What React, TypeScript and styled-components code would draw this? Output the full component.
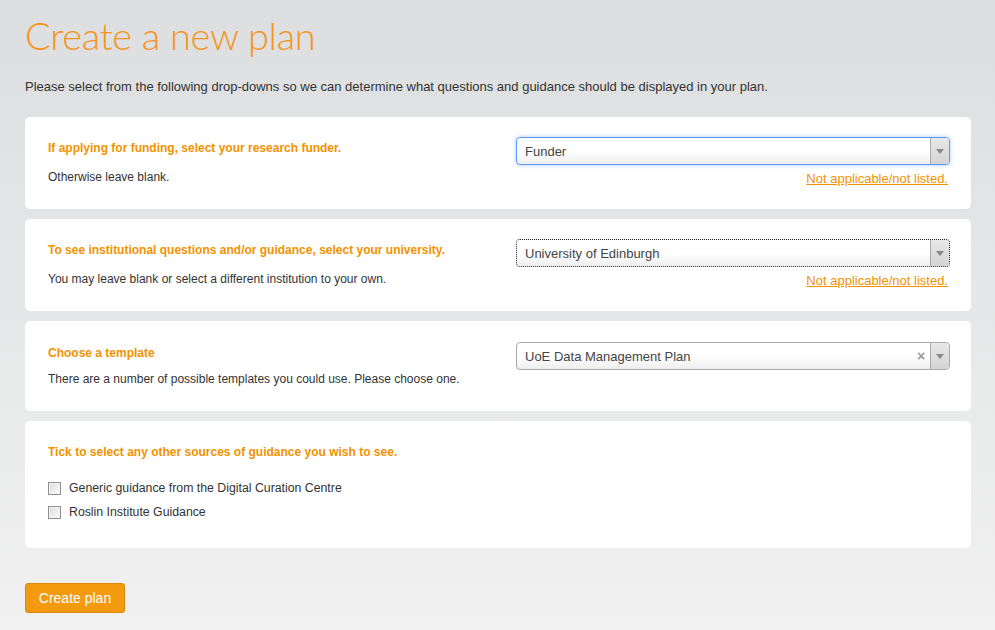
import React from 'react';
import styled, { createGlobalStyle } from 'styled-components';

const GlobalStyle = createGlobalStyle`
  html, body {
    margin: 0;
    padding: 0;
    min-height: 100%;
  }
  body {
    background: linear-gradient(to bottom, #dcdedf 0%, #f1f1f1 100%);
    font-family: 'Liberation Sans', Arial, sans-serif;
    font-size: 12px;
    color: #333;
    min-height: 630px;
  }
`;

const Page = styled.div`
  padding: 15px 24px 20px 25px;
`;

const Title = styled.h1`
  margin: 0;
  font-family: Lato, 'Liberation Sans', sans-serif;
  font-weight: 300;
  font-size: 38px;
  line-height: 40px;
  letter-spacing: -0.3px;
  color: #f7941d;
`;

const Intro = styled.p`
  margin: 24px 0 23px;
  font-size: 13px;
  line-height: 15px;
  color: #333;
`;

const Cards = styled.div`
  display: flex;
  flex-direction: column;
  gap: 10px;
`;

const Card = styled.section<{ $pad?: string }>`
  background: #fff;
  border-radius: 5px;
  padding: ${({ $pad }) => $pad || '20px 21px 24px 23px'};
  display: grid;
  grid-template-columns: 1fr 434px;
  column-gap: 20px;
`;

const Wide = styled.section`
  background: #fff;
  border-radius: 5px;
  padding: 24px 23px 28px;
`;

const Left = styled.div`
  padding-top: 4px;
`;

const Label = styled.div`
  font-weight: bold;
  color: #f39200;
  line-height: 15px;
`;

const Hint = styled.div<{ $gap: number }>`
  margin-top: ${({ $gap }) => $gap}px;
  line-height: 15px;
  color: #333;
`;

const Right = styled.div`
  display: flex;
  flex-direction: column;
  align-items: flex-end;
`;

const SelectBox = styled.div<{ $state?: 'focus' | 'dotted' }>`
  width: 100%;
  box-sizing: border-box;
  height: 28px;
  display: flex;
  align-items: stretch;
  border-radius: 4px;
  background: linear-gradient(to bottom, #ffffff 0%, #ffffff 50%, #eeeeee 100%);
  border: 1px solid #aaa;
  ${({ $state }) =>
    $state === 'focus'
      ? 'border-color: #5897fb; box-shadow: 0 0 4px rgba(88,151,251,0.5);'
      : ''}
  ${({ $state }) => ($state === 'dotted' ? 'border: 1px dotted #222;' : '')}
`;

const SelectText = styled.span`
  flex: 1;
  padding-left: 8px;
  display: flex;
  align-items: center;
  font-size: 13px;
  color: #444;
`;

const Clear = styled.span`
  width: 18px;
  display: flex;
  align-items: center;
  justify-content: center;
  color: #999;
  font-size: 14px;
  font-weight: bold;
`;

const Arrow = styled.span`
  width: 18px;
  border-left: 1px solid #aaa;
  border-radius: 0 3px 3px 0;
  background: linear-gradient(to bottom, #e8e8e8 0%, #d4d4d4 100%);
  display: flex;
  align-items: center;
  justify-content: center;

  &::after {
    content: '';
    border-left: 4px solid transparent;
    border-right: 4px solid transparent;
    border-top: 5px solid #888;
  }
`;

const NotListed = styled.a`
  margin-top: 6px;
  margin-right: 2px;
  font-size: 13px;
  line-height: 15px;
  color: #f39200;
  text-decoration: underline;
  cursor: pointer;
`;

const Checks = styled.div`
  margin-top: 21px;
  display: flex;
  flex-direction: column;
  gap: 9px;
`;

const CheckRow = styled.label`
  display: flex;
  align-items: center;
  gap: 8px;
  font-size: 12.3px;
  line-height: 15px;
  color: #333;
`;

const Box = styled.input.attrs({ type: 'checkbox' })`
  appearance: none;
  margin: 0;
  width: 13px;
  height: 13px;
  box-sizing: border-box;
  border: 1px solid #8f8f8f;
  background: linear-gradient(135deg, #dcdcdc 0%, #fbfbfb 100%);
  box-shadow: inset 0 0 0 1px #f4f4f4;
`;

const Submit = styled.button`
  margin-top: 35px;
  width: 100px;
  height: 30px;
  border: 1px solid #dd8a08;
  border-radius: 3px;
  background: #f49a0f;
  color: #fff;
  font-family: 'Liberation Sans', Arial, sans-serif;
  font-size: 14px;
  cursor: pointer;
`;

interface SelectProps {
  value: string;
  state?: 'focus' | 'dotted';
  clearable?: boolean;
}

const Select: React.FC<SelectProps> = ({ value, state, clearable }) => (
  <SelectBox $state={state}>
    <SelectText>{value}</SelectText>
    {clearable && <Clear>×</Clear>}
    <Arrow />
  </SelectBox>
);

const guidance = [
  'Generic guidance from the Digital Curation Centre',
  'Roslin Institute Guidance',
];

const App: React.FC = () => (
  <Page>
    <GlobalStyle />
    <Title>Create a new plan</Title>
    <Intro>
      Please select from the following drop-downs so we can determine what
      questions and guidance should be displayed in your plan.
    </Intro>
    <Cards>
      <Card $pad="20px 21px 23px 23px">
        <Left>
          <Label>If applying for funding, select your research funder.</Label>
          <Hint $gap={14}>Otherwise leave blank.</Hint>
        </Left>
        <Right>
          <Select value="Funder" state="focus" />
          <NotListed>Not applicable/not listed.</NotListed>
        </Right>
      </Card>
      <Card $pad="20px 21px 23px 23px">
        <Left>
          <Label>
            To see institutional questions and/or guidance, select your
            university.
          </Label>
          <Hint $gap={14}>
            You may leave blank or select a different institution to your own.
          </Hint>
        </Left>
        <Right>
          <Select value="University of Edinburgh" state="dotted" />
          <NotListed>Not applicable/not listed.</NotListed>
        </Right>
      </Card>
      <Card $pad="21px 21px 24px 23px">
        <Left>
          <Label>Choose a template</Label>
          <Hint $gap={11}>
            There are a number of possible templates you could use. Please
            choose one.
          </Hint>
        </Left>
        <Right>
          <Select value="UoE Data Management Plan" clearable />
        </Right>
      </Card>
      <Wide>
        <Label>Tick to select any other sources of guidance you wish to see.</Label>
        <Checks>
          {guidance.map(g => (
            <CheckRow key={g}>
              <Box />
              {g}
            </CheckRow>
          ))}
        </Checks>
      </Wide>
    </Cards>
    <Submit>Create plan</Submit>
  </Page>
);

export default App;
